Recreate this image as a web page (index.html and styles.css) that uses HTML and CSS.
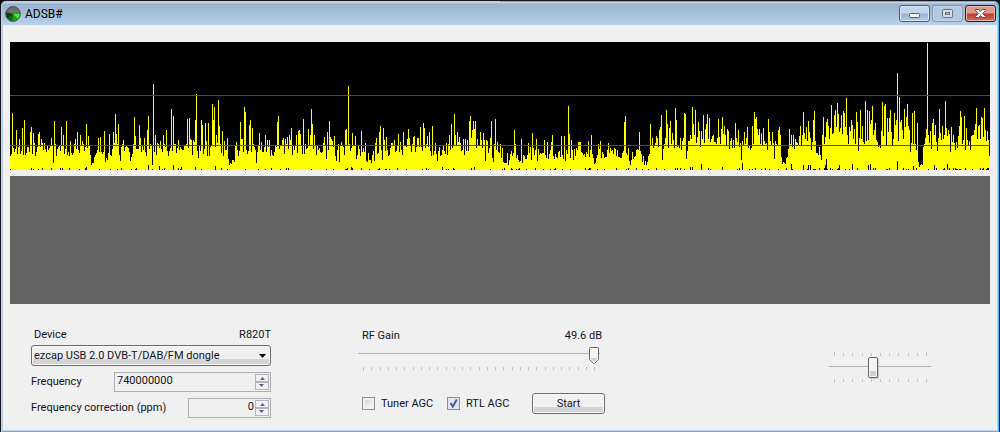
FILE: index.html
```html
<!DOCTYPE html>
<html lang="en">
<head>
<meta charset="utf-8">
<title>ADSB#</title>
<link rel="stylesheet" href="styles.css">
</head>
<body>
<div class="window">
  <header class="titlebar">
    <svg class="app-icon" viewBox="0 0 16 16" aria-hidden="true">
      <circle cx="8" cy="8" r="7.5" fill="#123d12"/>
      <path d="M8 8 1 6A7.4 7.4 0 0 1 15.4 8Z" fill="#6a746c"/>
      <path d="M8 8 15.4 8A7.4 7.4 0 0 1 13 13.5Z" fill="#3cf03c"/>
      <path d="M8 8 13 13.5A7.4 7.4 0 0 1 7 15.4Z" fill="#17a517"/>
      <path d="M8 8 7 15.4A7.4 7.4 0 0 1 2 12.4Z" fill="#0c6a12"/>
      <circle cx="8" cy="8" r="7.3" fill="none" stroke="#4a5a50"/>
    </svg>
    <h1 class="title">ADSB#</h1>
    <div class="caption-buttons">
      <button class="caption" type="button" aria-label="Minimize">
        <svg viewBox="0 0 13 11"><rect x="1.5" y="5.5" width="10" height="4" rx="1" fill="#f4f4f4" stroke="#565c68"/></svg>
      </button>
      <button class="caption caption-off" type="button" aria-label="Maximize">
        <svg viewBox="0 0 13 11"><rect x="1.5" y="1.5" width="10" height="8" rx="1" fill="#d9dde3" stroke="#6a6f7a"/><rect x="4.5" y="4.5" width="4" height="2" fill="#b5cbe4" stroke="#6a6f7a"/></svg>
      </button>
      <button class="caption caption-close" type="button" aria-label="Close">
        <svg viewBox="0 0 13 11"><path d="M1.5 1.5H4.7L6.5 3.4 8.3 1.5H11.5V2.5L8.7 5.5 11.5 8.5V9.5H8.3L6.5 7.6 4.7 9.5H1.5V8.5L4.3 5.5 1.5 2.5Z" fill="#f6f6f6" stroke="#5a4a54"/></svg>
      </button>
    </div>
  </header>
  <main class="client">
    <svg class="spectrum" viewBox="0 0 980 128" preserveAspectRatio="none" shape-rendering="crispEdges" role="img" aria-label="Signal level">
      <path id="bars" fill="#ffff00"/>
      <path id="floor" fill="#000"/>
      <rect x="0" y="53" width="980" height="1" fill="#008000"/>
      <rect x="0" y="103" width="980" height="1" fill="#ff0000"/>
    </svg>
    <div class="waterfall"></div>
    <form class="controls">
      <section class="device">
        <div class="line device-head"><label for="device">Device</label><output for="device">R820T</output></div>
        <select id="device" class="combo"><option>ezcap USB 2.0 DVB-T/DAB/FM dongle</option></select>
        <div class="line">
          <label for="freq">Frequency</label>
          <div class="spin spin-wide">
            <input id="freq" type="text" value="740000000">
            <div class="arrows"><button type="button" class="arrow up" aria-label="Increase frequency"></button><button type="button" class="arrow down" aria-label="Decrease frequency"></button></div>
          </div>
        </div>
        <div class="line">
          <label for="ppm">Frequency correction (ppm)</label>
          <div class="spin spin-narrow">
            <input id="ppm" class="right" type="text" value="0">
            <div class="arrows"><button type="button" class="arrow up" aria-label="Increase correction"></button><button type="button" class="arrow down" aria-label="Decrease correction"></button></div>
          </div>
        </div>
      </section>
      <section class="gain">
        <div class="line gain-head"><label for="gain">RF Gain</label><output for="gain">49.6 dB</output></div>
        <input id="gain" class="slider gain-slider" type="range" min="0" max="28" value="28">
        <div class="ticks gain-ticks" data-count="29"></div>
        <div class="agc">
          <label class="check"><input type="checkbox">Tuner AGC</label>
          <label class="check"><input type="checkbox" checked>RTL AGC</label>
          <button class="start" type="button">Start</button>
        </div>
      </section>
      <section class="contrast">
        <div class="ticks ticks-top" data-count="11"></div>
        <input class="slider contrast-slider" type="range" min="0" max="100" value="42" aria-label="Contrast">
        <div class="ticks" data-count="11"></div>
      </section>
    </form>
  </main>
</div>
<script src="spectrum.js"></script>
</body>
</html>
```
FILE: styles.css
```css
* { box-sizing: border-box; }

body {
  margin: 0;
  background: #000;
  font: 11px/14px Roboto, "Liberation Sans", Arial, sans-serif;
  color: #101018;
}

.window {
  display: flex;
  flex-direction: column;
  min-height: 100vh;
  border: 1px solid #17181c;
  border-radius: 6px 6px 0 0;
  padding: 1px;
  background: linear-gradient(90deg, #b9d1ea 50%, #35c5ee 50%);
}

.titlebar {
  display: flex;
  align-items: center;
  height: 23px;
  padding: 0 2px 0 3px;
  border-radius: 5px 5px 0 0;
  background: linear-gradient(#d3e1f0 0, #9ab4d0 2px, #a6bfdb 50%, #b9d1ea 100%);
}

.app-icon { width: 16px; height: 16px; }

.title {
  flex: 1;
  margin: 0 0 0 4px;
  font: 12px/16px Roboto, "Open Sans", sans-serif;
  color: #000;
}

.caption-buttons { display: flex; gap: 2px; }

.caption {
  display: flex;
  align-items: center;
  justify-content: center;
  width: 31px;
  height: 17px;
  padding: 0;
  border: 1px solid #4f5d74;
  border-radius: 3px;
  background: linear-gradient(#c3d5ea 48%, #98b2d0 52%, #b4cbe5);
  box-shadow: inset 0 0 0 1px #dce8f5;
}

.caption svg { width: 13px; height: 11px; }

.caption-off {
  border-color: #8296b4;
  background: #b2c9e3;
  box-shadow: inset 0 0 0 1px #c4d6ea;
}

.caption-close {
  border-color: #43101c;
  background: linear-gradient(#dd9a8c 48%, #bc3c2a 52%, #cf7060);
  box-shadow: inset 0 0 0 1px #e8b8ae;
}

.client {
  flex: 1;
  padding: 17px 7px 12px;
  border: 1px solid #b9d1ea;
  border-top: 0;
  background: #f0f0f0;
  box-shadow: 0 1px #35c5ee;
}

.spectrum {
  display: block;
  width: 100%;
  height: 128px;
  background: #000;
}

.waterfall {
  height: 128px;
  margin-top: 6px;
  background: #646464;
}

.controls {
  display: flex;
  padding: 24px 59px 0 21px;
}

.line {
  display: flex;
  align-items: center;
  justify-content: space-between;
}

.device { width: 240px; }
.device-head { padding-left: 3px; }

.device .line + .line { margin-top: 6px; }

.combo {
  display: block;
  width: 100%;
  height: 21px;
  margin: 3px 0 6px;
  padding: 0 2px;
  appearance: none;
  border: 1px solid #6a6a6a;
  border-radius: 3px;
  background:
    url("data:image/svg+xml,%3Csvg xmlns='http://www.w3.org/2000/svg' width='7' height='4'%3E%3Cpath d='M0 0H7L3.5 4Z'/%3E%3C/svg%3E") no-repeat right 4px center,
    linear-gradient(#f0f0f0 13px, #d4d4d4 13px);
  box-shadow: inset 0 0 0 1px #f8f8f8;
  font: inherit;
  color: inherit;
}

.spin {
  display: flex;
  height: 20px;
  padding: 1px;
  border: 1px solid #abadb3;
}

.spin-wide { width: 157px; }
.spin-narrow { width: 83px; }

.spin input {
  flex: 1;
  min-width: 0;
  padding: 0 1px 2px;
  border: 0;
  background: transparent;
  font: inherit;
  color: inherit;
}

.spin .right { text-align: right; }

.arrows {
  display: flex;
  flex-direction: column;
  width: 14px;
}

.arrow {
  flex: 1;
  padding: 0;
  border: 1px solid #b4b4b8;
  background: #f0f0f0 url("data:image/svg+xml,%3Csvg xmlns='http://www.w3.org/2000/svg' width='5' height='3'%3E%3Cpath d='M0 3H5L2.5 0Z' fill='%234b62a4'/%3E%3C/svg%3E") no-repeat center;
}

.down { transform: rotate(180deg); }

.gain {
  width: 247px;
  margin-left: 87px;
}

.gain-head { padding: 1px 3px 0 4px; }

.slider {
  display: block;
  margin: 0;
  appearance: none;
  background: linear-gradient(#b0b0b0, #b0b0b0) no-repeat 0 10px / 100% 1px;
}

.slider::-webkit-slider-thumb { appearance: none; }

.gain-slider {
  width: 242px;
  height: 18px;
  margin-top: 4px;
  background-position: 0 6px;
}

.gain-slider::-webkit-slider-thumb {
  width: 12px;
  height: 18px;
  background: url("data:image/svg+xml,%3Csvg xmlns='http://www.w3.org/2000/svg' width='12' height='18'%3E%3Cpath d='M2.5.5H9.5Q10.5.5 10.5 1.5V12.5L6.5 16.5H5.5L1.5 12.5V1.5Q1.5.5 2.5.5Z' fill='%23f4f4f4' stroke='%23666'/%3E%3Cpath d='M3 11H9V12L6 15 3 12Z' fill='%23d0d0d0'/%3E%3C/svg%3E");
}

.ticks {
  display: flex;
  justify-content: space-between;
  height: 4px;
  margin: 0 4px 0 5px;
}

.ticks i {
  width: 1px;
  height: 3px;
  background: #c4c4c4;
}

.ticks i:first-child,
.ticks i:last-child { height: 4px; }

.ticks-top { align-items: flex-end; }

.gain-ticks {
  width: 232px;
  margin-top: 2px;
}

.agc {
  display: flex;
  align-items: center;
  margin-top: 22px;
  padding-left: 4px;
}

.check {
  display: flex;
  align-items: center;
  gap: 6px;
  width: 85px;
}

.check input {
  width: 13px;
  height: 13px;
  margin: 0;
  appearance: none;
  border: 1px solid #8e8f8f;
  background: linear-gradient(135deg, #c9ced6, #f4f4f4 75%);
  box-shadow: inset 0 0 0 2px #f0f0f0;
}

.check input:checked {
  background: url("data:image/svg+xml,%3Csvg xmlns='http://www.w3.org/2000/svg' width='11' height='11'%3E%3Cpath d='M2.5 5 4.8 8.5 8.8 1.5' fill='none' stroke='%23455b9c' stroke-width='2'/%3E%3C/svg%3E") no-repeat center, #e2e5ec;
  box-shadow: none;
}

.start {
  width: 73px;
  height: 21px;
  padding: 0;
  border: 1px solid #6e6e6e;
  border-radius: 3px;
  background: linear-gradient(#f1f1f1 13px, #d4d4d4 13px);
  box-shadow: inset 0 0 0 1px #f8f8f8;
  font: inherit;
  color: inherit;
}

.contrast {
  width: 102px;
  margin: 24px 0 0 auto;
}

.contrast-slider {
  width: 102px;
  height: 23px;
}

.contrast-slider::-webkit-slider-thumb {
  width: 10px;
  height: 21px;
  border: 1px solid #666;
  border-radius: 2px;
  background: linear-gradient(#d0d0d0, #d0d0d0) no-repeat center 13px / 6px 5px, #f4f4f4;
  box-shadow: 1px 1px #c8c8c8;
}
```
FILE: spectrum.js
```js
// Peak and dip levels, as "column,level" pairs.
const levels = `
2,57 6,40 9,31 12,42 14,50 20,38 21,43 23,37 28,36 29,38 31,31 41,32 43,7 44,49 51,43 53,35 56,49 60,29
65,31 67,38 70,35 72,29 76,46 78,34 81,5 82,7 83,7 84,13 85,15 86,17 88,32 90,33 94,39 95,8 96,12 97,10 99,36
103,38 105,56 106,36 108,46 110,9 113,30 120,9 121,13 124,53 125,34 129,45 130,32 134,32 137,40 138,54 142,5
143,86 145,35 150,29 153,35 156,40 161,61 163,54 168,30 177,51 179,52 180,31 181,30 183,30 184,28 185,50 186,76
188,12 191,50 192,45 195,47 196,29 198,47 202,66 203,50 204,63 206,35 208,70 209,44 212,39 214,29 217,32
218,11 219,5 220,7 221,6 222,10 223,10 224,8 226,28 230,48 231,31 232,31 234,63 235,58 239,45
240,50 242,42 246,7 249,37 251,28 255,35 257,30 259,30 267,48 268,54 272,30 273,32 275,31 277,33 279,35 280,30
281,42 286,35 288,39 289,40 290,36 293,51 298,41 300,35 301,61 302,46 304,35 314,33 316,11 317,38 319,49 320,33
321,31 322,29 324,34 325,14 326,9 329,8 331,28 335,40 336,41 338,84 342,37 345,34 346,11 351,39 356,9 357,8
358,17 359,10 360,10 361,7 364,9 365,27 366,32 369,38 370,44 372,10 373,42 374,30 376,33 384,30 388,36 390,28
393,38 397,31 398,41 399,32 403,33 404,34 407,32 408,32 410,43 413,47 414,42 417,34 419,38 422,44 427,9
439,35 441,46 444,56 445,35 447,38 448,28 449,33 453,31 455,31 457,30 459,49 460,54 461,32 462,40 463,49 464,41
465,49 467,31 470,38 471,30 473,37 474,30 475,9 476,30 477,29 480,32 481,49 482,12 483,8 485,51 487,28
493,8 494,7 495,7 496,7 498,5 499,10 504,40 505,26 509,8 510,9 511,31 512,7 518,27 522,37 526,31 527,9 534,30
537,28 541,28 542,35 551,34 554,34 555,9 558,64 559,36 561,30 568,28 569,28 570,28 578,29 581,35 584,6 585,7
586,12 588,26 590,29 598,27 614,48 615,54 619,9 620,5 629,38 632,8 633,14 634,5 635,9 636,5 637,8 640,46
642,32 645,27 646,34 647,32 649,40 650,43 651,55 652,10 654,26 656,60 657,46 659,42 660,49 662,37 663,30
665,62 666,50 672,29 673,32 674,57 675,56 676,11 680,35 682,63 683,46 684,35 685,60 687,33 688,48 689,39
691,39 692,31 693,55 695,41 696,46 697,56 699,52 700,28 702,34 703,35 704,28 707,32 708,51 709,33 711,41
712,53 713,36 714,44 715,35 717,41 718,39 721,32 725,47 726,32 728,40 731,10 732,29 734,38 735,26 736,32 737,43
742,44 744,58 745,51 746,53 747,41 748,35 749,41 751,37 753,42 754,29 758,51 759,38 760,29 762,38 764,11 765,29
768,40 769,43 770,35 771,13 772,6 773,8 774,7 775,6 776,12 777,13 778,21 779,41 781,35 783,35 785,31 789,34
790,44 792,35 793,58 794,37 795,31 796,43 797,29 798,49 799,38 800,32 803,50 804,59 805,29 806,17 807,17 808,15
809,23 810,15 811,10 812,35 813,53 815,33 816,48 817,51 818,44 819,31 820,42 821,65 822,36 823,37 824,55
825,60 826,43 827,67 828,56 829,38 830,42 831,55 832,36 833,59 834,57 835,43 836,72 837,35 839,43 840,39
841,50 842,45 843,31 844,41 846,58 847,48 849,32 850,60 851,31 852,44 855,69 856,29 857,60 858,30 859,59
860,46 861,50 862,64 863,35 864,40 865,47 866,30 867,28 871,39 872,68 873,34 874,64 875,66 877,52 878,38 879,52
880,60 881,38 883,31 884,57 885,45 886,50 887,97 888,29 889,73 890,48 891,50 892,40 893,31 894,61 895,43
896,53 897,66 898,44 899,40 900,18 901,27 902,57 903,26 904,59 907,47 908,8 909,3 910,5 911,6 912,5 913,23
914,26 915,32 916,41 917,127 918,35 920,39 922,47 923,51 924,35 925,45 926,28 928,32 929,61 930,37 931,30
932,44 933,31 934,35 935,69 936,42 937,34 938,40 939,36 940,18 941,43 942,28 943,35 948,34 949,44 950,59
951,53 953,30 954,54 956,42 957,30 959,29 961,34 962,35 963,35 964,40 965,46 966,62 967,31 968,44 969,45
970,31 971,53 972,52 973,33 974,62 975,40 976,29 977,39 978,30 979,14`;

const notches = { 76: 3, 138: 5, 149: 4, 163: 5, 171: 3, 185: 3, 205: 4, 341: 3, 432: 3, 464: 3, 680: 3, 682: 3,
  691: 6, 712: 3, 732: 7, 781: 6, 793: 5, 798: 5, 800: 5, 815: 5, 816: 11, 829: 5, 842: 6, 858: 5, 860: 6,
  887: 9, 903: 4, 924: 5, 937: 6 };

const known = new Map(levels.trim().split(/\s+/).map(p => p.split(",").map(Number)));
let seed = 77;
const noise = () => (seed = (seed * 16807) % 2147483647) / 2147483647;

let bars = "";
let floor = "";
for (let x = 0; x < 980; x++) {
  const base = x > 490 && x < 640 ? 10 : x > 640 ? 19 : 14;
  const random = Math.round(base + noise() * (x > 740 ? 9 : 13));
  const h = known.has(x) ? known.get(x) : random;
  bars += `M${x} 128v-${h}h1v${h}z`;

  const chance = noise();
  const limit = x > 740 ? 0.3 : 0.13;
  const n = notches[x] || (chance < limit / 3 ? 2 : chance < limit ? 1 : 0);
  if (n) floor += `M${x} 128v-${n}h1v${n}z`;
}
document.getElementById("bars").setAttribute("d", bars);
document.getElementById("floor").setAttribute("d", floor);

for (const scale of document.querySelectorAll(".ticks")) {
  for (let i = 0; i < Number(scale.dataset.count); i++) scale.append(document.createElement("i"));
}
```
